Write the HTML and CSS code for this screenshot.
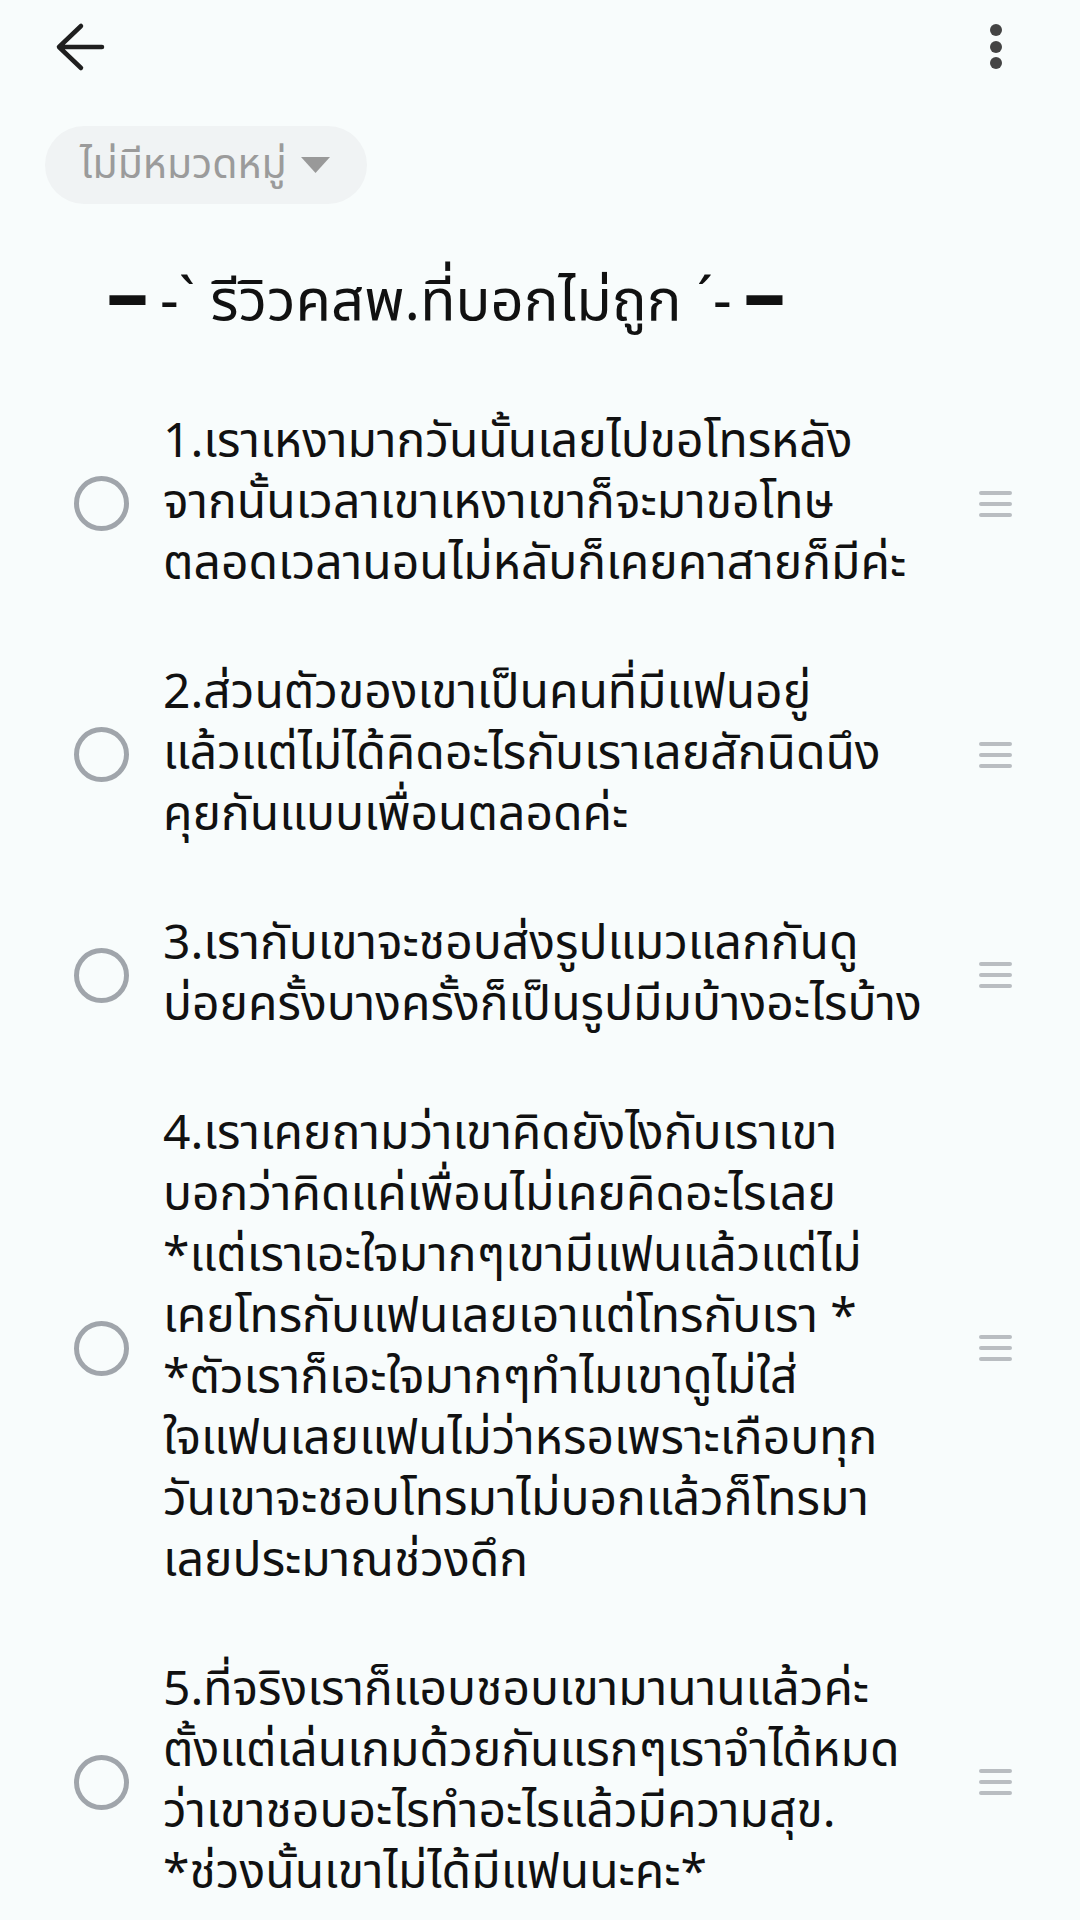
FILE: index.html
```html
<!DOCTYPE html>
<html lang="th">
<head>
    <meta charset="UTF-8">
    <meta name="viewport" content="width=device-width, initial-scale=1.0">
    <title>รีวิวคสพ.ที่บอกไม่ถูก</title>
    <link rel="stylesheet" href="styles.css">
</head>
<body>

<header class="topbar">
    <svg class="back" width="50" height="50" viewBox="0 0 50 50">
        <path d="M47 25H4 M26 4 L4 25 L26 46" fill="none" stroke="#1f1f1f" stroke-width="4.5" stroke-linecap="round" stroke-linejoin="round"/>
    </svg>
    <svg class="more" width="24" height="48" viewBox="0 0 24 48">
        <circle cx="12" cy="7" r="6" fill="#444"/>
        <circle cx="12" cy="24" r="6" fill="#444"/>
        <circle cx="12" cy="40" r="6" fill="#444"/>
    </svg>
</header>

<div class="chip">
    <span>ไม่มีหมวดหมู่</span>
    <svg width="29" height="16" viewBox="0 0 29 16"><path d="M0 0H29L14.5 16Z" fill="#999"/></svg>
</div>

<h1 class="title">━ -ˋ รีวิวคสพ.ที่บอกไม่ถูก ˊ- ━</h1>

<ul class="checklist">
    <li class="item">
        <span class="radio"></span>
        <p class="item-text">1.เราเหงามากวันนั้นเลยไปขอโทรหลัง<br>จากนั้นเวลาเขาเหงาเขาก็จะมาขอโทษ<br>ตลอดเวลานอนไม่หลับก็เคยคาสายก็มีค่ะ</p>
        <svg class="handle" width="33" height="26" viewBox="0 0 33 26"><path d="M2 2H31 M2 13H31 M2 24H31" stroke="#b9bdc1" stroke-width="4" stroke-linecap="round"/></svg>
    </li>
    <li class="item">
        <span class="radio"></span>
        <p class="item-text">2.ส่วนตัวของเขาเป็นคนที่มีแฟนอยู่<br>แล้วแต่ไม่ได้คิดอะไรกับเราเลยสักนิดนึง<br>คุยกันแบบเพื่อนตลอดค่ะ</p>
        <svg class="handle" width="33" height="26" viewBox="0 0 33 26"><path d="M2 2H31 M2 13H31 M2 24H31" stroke="#b9bdc1" stroke-width="4" stroke-linecap="round"/></svg>
    </li>
    <li class="item">
        <span class="radio"></span>
        <p class="item-text">3.เรากับเขาจะชอบส่งรูปแมวแลกกันดู<br>บ่อยครั้งบางครั้งก็เป็นรูปมีมบ้างอะไรบ้าง</p>
        <svg class="handle" width="33" height="26" viewBox="0 0 33 26"><path d="M2 2H31 M2 13H31 M2 24H31" stroke="#b9bdc1" stroke-width="4" stroke-linecap="round"/></svg>
    </li>
    <li class="item">
        <span class="radio"></span>
        <p class="item-text">4.เราเคยถามว่าเขาคิดยังไงกับเราเขา<br>บอกว่าคิดแค่เพื่อนไม่เคยคิดอะไรเลย<br>*แต่เราเอะใจมากๆเขามีแฟนแล้วแต่ไม่<br>เคยโทรกับแฟนเลยเอาแต่โทรกับเรา *<br>*ตัวเราก็เอะใจมากๆทำไมเขาดูไม่ใส่<br>ใจแฟนเลยแฟนไม่ว่าหรอเพราะเกือบทุก<br>วันเขาจะชอบโทรมาไม่บอกแล้วก็โทรมา<br>เลยประมาณช่วงดึก</p>
        <svg class="handle" width="33" height="26" viewBox="0 0 33 26"><path d="M2 2H31 M2 13H31 M2 24H31" stroke="#b9bdc1" stroke-width="4" stroke-linecap="round"/></svg>
    </li>
    <li class="item">
        <span class="radio"></span>
        <p class="item-text">5.ที่จริงเราก็แอบชอบเขามานานแล้วค่ะ<br>ตั้งแต่เล่นเกมด้วยกันแรกๆเราจำได้หมด<br>ว่าเขาชอบอะไรทำอะไรแล้วมีความสุข.<br>*ช่วงนั้นเขาไม่ได้มีแฟนนะคะ*</p>
        <svg class="handle" width="33" height="26" viewBox="0 0 33 26"><path d="M2 2H31 M2 13H31 M2 24H31" stroke="#b9bdc1" stroke-width="4" stroke-linecap="round"/></svg>
    </li>
</ul>

</body>
</html>
```

FILE: styles.css
```css
body {
    margin: 0;
    background: #f8fcfc;
    font-family: "Noto Sans Thai", "Noto Sans", sans-serif;
    color: #111;
    overflow: hidden;
}
.topbar {
    height: 94px;
    display: flex;
    align-items: center;
    justify-content: space-between;
    padding: 0 72px 0 55px;
}
.chip {
    display: inline-flex;
    align-items: center;
    gap: 14px;
    height: 78px;
    margin: 32px 0 0 45px;
    padding: 0 37px 0 35px;
    border-radius: 39px;
    background: #f0f3f4;
    color: #9b9b9b;
    font-size: 41px;
}
.title {
    margin: 58px 0 0;
    padding-left: 110px;
    font-size: 58px;
    font-weight: normal;
    line-height: 80px;
    white-space: nowrap;
}
.checklist {
    list-style: none;
    margin: 36px 0 0;
    padding: 0;
}
.item {
    display: flex;
    align-items: center;
    padding: 34px 68px 34px 74px;
}
.radio {
    flex: none;
    width: 45px;
    height: 45px;
    border: 5px solid #a0a5ab;
    border-radius: 50%;
}
.item-text {
    flex: 1;
    margin: 0 0 0 34px;
    font-size: 48px;
    line-height: 61px;
    white-space: nowrap;
}
.handle {
    flex: none;
}
```
